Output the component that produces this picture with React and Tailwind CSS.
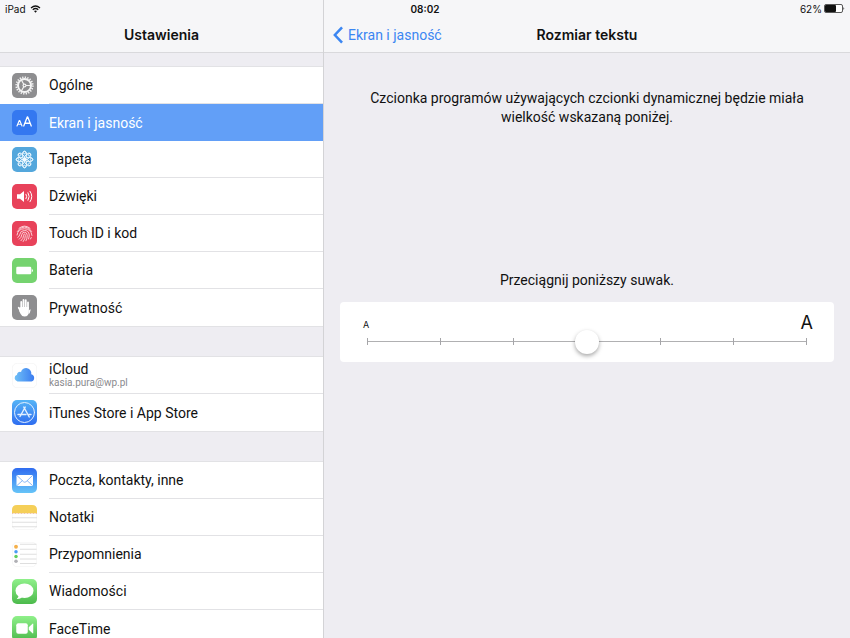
import React, { useState } from 'react'

const Tile = ({ children }) => (
  <svg viewBox="0 0 50 50" className="h-[25px] w-[25px] shrink-0" aria-hidden="true">
    {children}
  </svg>
)

const GearIcon = () => (
  <Tile>
    <rect width="50" height="50" rx="10" fill="#8e8e90" />
    <circle cx="25" cy="25" r="16.5" fill="none" stroke="#f4f4f4" strokeWidth="3.5" strokeDasharray="2.6 2.58" />
    <circle cx="25" cy="25" r="13" fill="none" stroke="#f4f4f4" strokeWidth="4" />
    <g stroke="#f4f4f4" strokeWidth="2.4">
      <path d="M25 25h12M25 25l-6-10.4M25 25l-6 10.4" />
    </g>
    <circle cx="25" cy="25" r="4" fill="#f4f4f4" />
    <circle cx="25" cy="25" r="1.6" fill="#8e8e90" />
  </Tile>
)

const DisplayIcon = () => (
  <Tile>
    <rect width="50" height="50" rx="10" fill="#3478f0" />
    <g fill="none" stroke="#fff" strokeLinejoin="round" strokeLinecap="round">
      <path d="M10 32l4.5-11h1L20 32M11.600 28.500h7" strokeWidth="2.2" />
      <path d="M23.500 32l7-18h1l7 18M26 26.500h10" strokeWidth="2.6" />
    </g>
  </Tile>
)

const petals = [0, 45, 90, 135, 180, 225, 270, 315]

const WallpaperIcon = () => (
  <Tile>
    <rect width="50" height="50" rx="10" fill="#54a7dc" />
    <g fill="none" stroke="#f2faff" strokeWidth="1.800">
      {petals.map((deg) => (
        <g key={deg} transform={`rotate(${deg} 25 25)`}>
          <ellipse cx="25" cy="16" rx="4.500" ry="7.500" />
          <circle cx="25" cy="11" r="2.500" />
        </g>
      ))}
    </g>
    <circle cx="25" cy="25" r="3.500" fill="#f2faff" />
  </Tile>
)

const SoundIcon = () => (
  <Tile>
    <rect width="50" height="50" rx="10" fill="#e8425a" />
    <path d="M10 20.500h6l8-6.500v22l-8-6.500h-6z" fill="#fff" />
    <g fill="none" stroke="#fff" strokeWidth="2" strokeLinecap="round">
      <path d="M28 20.500q3 4.500 0 9M32 17.500q5 7.500 0 15M36 14.500q7.500 10.500 0 21" />
    </g>
  </Tile>
)

const TouchIcon = () => (
  <Tile>
    <rect width="50" height="50" rx="10" fill="#e8425a" />
    <g fill="none" stroke="#fbd5da" strokeWidth="1.900" strokeLinecap="round">
      <path d="M14 14.500q11-9 22 0" />
      <path d="M10.500 21q5.500-9 14.500-9t14.500 9" />
      <path d="M10 28q2-12.500 15-12.500T40 29" />
      <path d="M11.500 33q3.500-2 4-6 1-8 9.500-8t9.500 9q0 4-1.500 8" />
      <path d="M14.500 36.500q4.500-3 5-9 .5-5 5.500-5t5.500 6q0 6-2.500 11" />
      <path d="M18 39.500q5-4.500 5.300-11 .2-2.500 1.700-2.500t1.700 3q0 6.500-4.200 12" />
      <path d="M38.500 33l-1.500 3" />
    </g>
  </Tile>
)

const BatteryTileIcon = () => (
  <Tile>
    <rect width="50" height="50" rx="10" fill="#75d36f" />
    <rect x="8.500" y="17.500" width="30" height="15" rx="2.500" fill="#fff" />
    <path d="M39.500 21.500q5 3.500 0 7z" fill="#fff" />
  </Tile>
)

const HandIcon = () => (
  <Tile>
    <rect width="50" height="50" rx="10" fill="#8e8e90" />
    <g fill="none" stroke="#fff" strokeWidth="3.600" strokeLinecap="round">
      <path d="M18.500 27V14M23 25V10M27.500 25V10.500M32 27V15" />
      <path d="M13.500 25.500l6 10" />
    </g>
    <path d="M16.700 24h17.100v8q0 11-9 11-5 0-7.500-5l-3-6z" fill="#fff" />
    <path d="M33.800 31q1.500-3 3.700-2-1 7-4.800 10z" fill="#fff" />
  </Tile>
)

const CloudIcon = () => (
  <Tile>
    <defs>
      <linearGradient id="cloud" x1="0" x2="1">
        <stop offset="0" stopColor="#6fc0f7" />
        <stop offset="1" stopColor="#3b7cf0" />
      </linearGradient>
    </defs>
    <rect x=".5" y=".5" width="49" height="49" rx="10" fill="#fff" stroke="#ececec" />
    <path d="M11 37a7 7 0 0 1-1-13.500 6 6 0 0 1 8-5.500 10.500 10.500 0 0 1 20.500 4.500A7.500 7.500 0 0 1 39 37z" fill="url(#cloud)" />
  </Tile>
)

const StoreIcon = () => (
  <Tile>
    <defs>
      <linearGradient id="store" x2="0" y2="1">
        <stop offset="0" stopColor="#55b4f6" />
        <stop offset="1" stopColor="#2f6df0" />
      </linearGradient>
    </defs>
    <rect width="50" height="50" rx="10" fill="url(#store)" />
    <g fill="none" stroke="#e4f1ff" strokeLinecap="round">
      <circle cx="25" cy="25" r="20" strokeWidth="2" />
      <path d="M26.500 14L16 33M23.500 14l11 20" strokeWidth="2.800" />
      <path d="M12 29h16M33.500 29h4.500" strokeWidth="2.800" />
    </g>
  </Tile>
)

const MailIcon = () => (
  <Tile>
    <defs>
      <linearGradient id="mail" x2="0" y2="1">
        <stop offset="0" stopColor="#2f6cf0" />
        <stop offset="1" stopColor="#66c4f8" />
      </linearGradient>
    </defs>
    <rect width="50" height="50" rx="10" fill="url(#mail)" />
    <rect x="9" y="14" width="33" height="22" rx="2.500" fill="#fff" />
    <path d="M10 15l13 12.500q2.500 2 5 0L41 15M10 35l11-10M41 35L30 25" fill="none" stroke="#6ea6f3" strokeWidth="1.600" />
  </Tile>
)

const NotesIcon = () => (
  <Tile>
    <rect x=".5" y=".5" width="49" height="49" rx="10" fill="#fff" stroke="#ececec" />
    <path d="M0 16v-6Q0 0 10 0h30q10 0 10 10v6z" fill="#f5cf58" />
    <path d="M0 17h50" stroke="#eab58a" strokeWidth="1.500" strokeDasharray="2 1" />
    <path d="M0 25.500h50M0 34.500h50M0 43.500h50" stroke="#d4d4d4" strokeWidth="1.500" />
  </Tile>
)

const RemindersIcon = () => (
  <Tile>
    <rect x=".5" y=".5" width="49" height="49" rx="10" fill="#fff" stroke="#ececec" />
    <path d="M16 4.500h33M16 14.500h33M16 24.500h33M16 34h33M16 43h33" stroke="#d3d3d3" strokeWidth="1.500" />
    <circle cx="8" cy="9.500" r="3.800" fill="#f5b04a" />
    <circle cx="8" cy="19.500" r="3.500" fill="#4a9bf5" />
    <circle cx="8" cy="29" r="3.500" fill="#62cf60" />
    <circle cx="8" cy="38.500" r="3.500" fill="#b0b0b5" />
  </Tile>
)

const GreenTile = ({ id }) => (
  <>
    <defs>
      <linearGradient id={id} x2="0" y2="1">
        <stop offset="0" stopColor="#8ff08a" />
        <stop offset="1" stopColor="#4cba4c" />
      </linearGradient>
    </defs>
    <rect width="50" height="50" rx="10" fill={`url(#${id})`} />
  </>
)

const MessagesIcon = () => (
  <Tile>
    <GreenTile id="messages" />
    <ellipse cx="25" cy="23.500" rx="18" ry="14.500" fill="#fff" />
    <path d="M13 32q1 5-3.500 8 7 .5 11-4z" fill="#fff" />
  </Tile>
)

const FaceTimeIcon = () => (
  <Tile>
    <GreenTile id="facetime" />
    <rect x="8.500" y="14.500" width="23" height="21" rx="4" fill="#fff" />
    <path d="M33.500 22.500L41 15.500q1.500-1 1.500 1v17q0 2-1.500 1l-7.500-7z" fill="#fff" />
  </Tile>
)

const groups = [
  [
    { id: 'general', label: 'Ogólne', icon: GearIcon },
    { id: 'display', label: 'Ekran i jasność', icon: DisplayIcon },
    { id: 'wallpaper', label: 'Tapeta', icon: WallpaperIcon },
    { id: 'sounds', label: 'Dźwięki', icon: SoundIcon },
    { id: 'touchid', label: 'Touch ID i kod', icon: TouchIcon },
    { id: 'battery', label: 'Bateria', icon: BatteryTileIcon },
    { id: 'privacy', label: 'Prywatność', icon: HandIcon },
  ],
  [
    { id: 'icloud', label: 'iCloud', detail: 'kasia.pura@wp.pl', icon: CloudIcon },
    { id: 'store', label: 'iTunes Store i App Store', icon: StoreIcon },
  ],
  [
    { id: 'mail', label: 'Poczta, kontakty, inne', icon: MailIcon },
    { id: 'notes', label: 'Notatki', icon: NotesIcon },
    { id: 'reminders', label: 'Przypomnienia', icon: RemindersIcon },
    { id: 'messages', label: 'Wiadomości', icon: MessagesIcon },
    { id: 'facetime', label: 'FaceTime', icon: FaceTimeIcon },
  ],
]

const Row = ({ item, active, last, onSelect }) => {
  const Icon = item.icon
  return (
    <li className={active ? 'bg-[#629ff7] text-white' : 'bg-white'}>
      <a href={`#${item.id}`} onClick={() => onSelect(item.id)} className="flex h-[37px] items-center gap-3 pl-3">
        <Icon />
        <span className={`flex h-full flex-1 flex-col justify-center ${last || active ? '' : 'border-b border-[#e2e2e5]'}`}>
          <span className="text-sm leading-4">{item.label}</span>
          {item.detail && <span className="text-[10px] leading-3 text-[#8a8a8e]">{item.detail}</span>}
        </span>
      </a>
    </li>
  )
}

const StatusBar = () => (
  <div className="absolute inset-x-0 top-0 grid h-[17px] grid-cols-3 items-center px-[5px] font-['Inter',sans-serif] text-[10px] leading-4">
    <div className="flex items-center gap-1">
      <span>iPad</span>
      <svg viewBox="0 0 22 16" className="h-2 w-[11px]" aria-hidden="true">
        <path d="M2 6q9-8 18 0M5.500 9.500q5.500-5 11 0" fill="none" stroke="#111" strokeWidth="2.400" />
        <path d="M8 12q3-2.500 6 0l-3 3.500z" fill="#111" />
      </svg>
    </div>
    <span className="text-center font-semibold">08:02</span>
    <div className="flex items-center justify-end gap-[2px]">
      <span>62%</span>
      <svg viewBox="0 0 42 18" className="h-[9px] w-[21px]" aria-hidden="true">
        <rect x="1" y="1" width="36" height="16" rx="3" fill="#fff" stroke="#222" strokeWidth="1.500" />
        <rect x="2" y="2" width="22" height="14" rx="2" fill="#111" />
        <path d="M39 6q3 3 0 6z" fill="#111" />
      </svg>
    </div>
  </div>
)

const TextSize = () => {
  const [size, setSize] = useState(3)

  return (
    <section className="mx-4 mt-3 rounded bg-white px-[27px] pt-3 pb-[17px]">
      <div className="-ml-1 -mr-[6px] flex h-[18px] items-center justify-between font-['Inter',sans-serif]" aria-hidden="true">
        <span className="pt-1 text-[9px]">A</span>
        <span className="text-lg leading-[18px]">A</span>
      </div>
      <div className="relative mt-[6px] flex h-[7px] items-center">
        <div className="h-px w-full bg-[#b0b0b2]" />
        <div className="absolute inset-0 flex justify-between">
          {[0, 1, 2, 3, 4, 5, 6].map((n) => (
            <span key={n} className="h-full w-px bg-[#a5a5a8]" />
          ))}
        </div>
        <input
          id="size"
          type="range"
          min="0"
          max="6"
          value={size}
          onChange={(e) => setSize(Number(e.target.value))}
          className="absolute -inset-x-3 h-6 appearance-none self-center bg-transparent [&::-webkit-slider-thumb]:h-6 [&::-webkit-slider-thumb]:w-6 [&::-webkit-slider-thumb]:appearance-none [&::-webkit-slider-thumb]:rounded-full [&::-webkit-slider-thumb]:bg-white [&::-webkit-slider-thumb]:shadow-[0_2px_4px_rgba(0,0,0,0.35)]"
        />
      </div>
    </section>
  )
}

const App = () => {
  const [selected, setSelected] = useState('display')

  return (
    <div className="relative flex h-screen overflow-hidden bg-[#eeedf2] font-['Roboto',sans-serif] text-[#111]">
      <aside className="w-[38%] shrink-0 overflow-hidden">
        <header className="flex h-[53px] items-end justify-center border-b border-[#d9d9dc] bg-[#f6f6f8] pb-[7px]">
          <h1 className="font-['Inter',sans-serif] text-sm font-semibold">Ustawienia</h1>
        </header>
        <nav className="mt-[13px] flex flex-col gap-[29px]">
          {groups.map((items, i) => (
            <ul key={i} className="border-y border-[#e2e2e5]">
              {items.map((item, n) => (
                <Row key={item.id} item={item} active={item.id === selected} last={n === items.length - 1} onSelect={setSelected} />
              ))}
            </ul>
          ))}
        </nav>
      </aside>

      <main className="min-w-0 flex-1 border-l border-[#d3d3d6]">
        <header className="grid h-[53px] grid-cols-[1fr_auto_1fr] items-end border-b border-[#d9d9dc] bg-[#f6f6f8] px-2 pb-[7px]">
          <a href="#display" className="flex items-center gap-1 text-sm text-[#3b86f2]">
            <svg viewBox="0 0 12 20" className="h-[18px] w-3" aria-hidden="true">
              <path d="M10.500 1.500L2.500 10l8 8.500" fill="none" stroke="currentColor" strokeWidth="2.800" />
            </svg>
            Ekran i jasność
          </a>
          <h2 className="font-['Inter',sans-serif] text-sm font-semibold">Rozmiar tekstu</h2>
        </header>
        <p className="px-8 pt-9 text-center text-sm leading-[19px]">
          Czcionka programów używających czcionki dynamicznej będzie miała wielkość wskazaną poniżej.
        </p>
        <label htmlFor="size" className="mt-36 block text-center text-sm leading-[19px]">
          Przeciągnij poniższy suwak.
        </label>
        <TextSize />
      </main>

      <StatusBar />
    </div>
  )
}

export default App
